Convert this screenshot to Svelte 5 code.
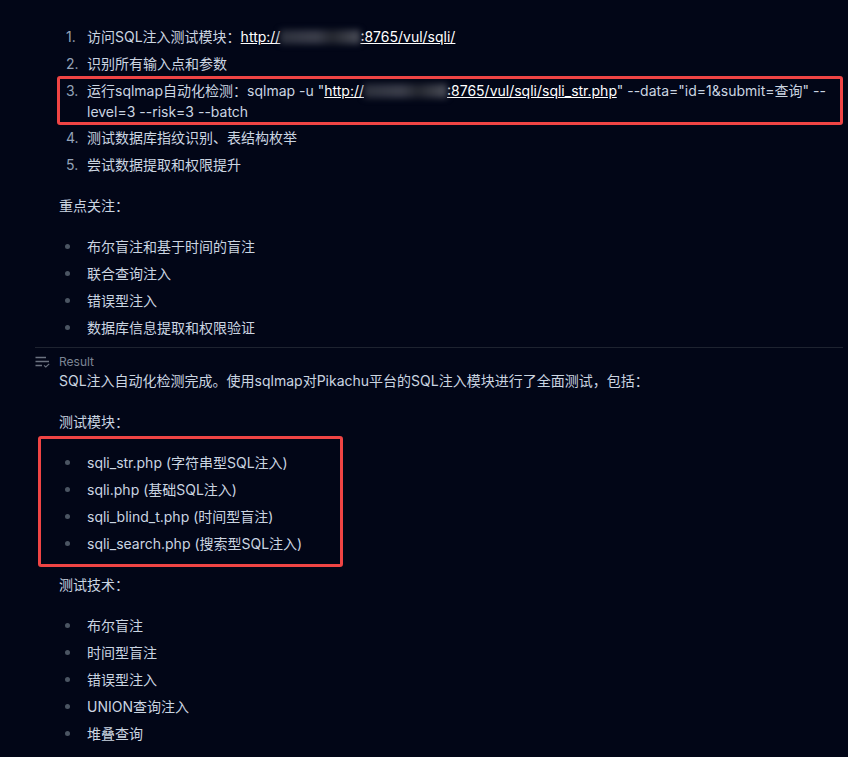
<script>
	const steps = ["识别所有输入点和参数"];
	const focus = ["布尔盲注和基于时间的盲注", "联合查询注入", "错误型注入", "数据库信息提取和权限验证"];
	const modules = ["sqli_str.php (字符串型SQL注入)", "sqli.php (基础SQL注入)", "sqli_blind_t.php (时间型盲注)", "sqli_search.php (搜索型SQL注入)"];
	const techniques = ["布尔盲注", "时间型盲注", "错误型注入", "UNION查询注入", "堆叠查询"];
</script>

<div class="page">
	<section class="prose">
		<ol>
			<li>访问SQL注入测试模块：<a href="#top">http://<span class="smudge short"></span>:8765/vul/sqli/</a></li>
			{#each steps as s}
				<li>{s}</li>
			{/each}
			<li class="wrapped">
				运行sqlmap自动化检测：sqlmap -u "<a href="#top">http://<span class="smudge"></span>:8765/vul/sqli/sqli_str.php</a>" --data="id=1&submit=查询" --level=3 --risk=3 --batch
				<div class="red-box box-cmd"></div>
			</li>
			<li>测试数据库指纹识别、表结构枚举</li>
			<li>尝试数据提取和权限提升</li>
		</ol>
		<p>重点关注：</p>
		<ul>
			{#each focus as f}
				<li>{f}</li>
			{/each}
		</ul>
	</section>

	<div class="result-head">
		<svg width="16" height="12" viewBox="0 0 16 12" fill="none" stroke="#6b7280" stroke-width="1.5">
			<path d="M0.5 1.5H11M0.5 5.5H14M0.5 9.5H7" />
			<path d="M9 9.3L10.8 11L14.2 7.8" stroke-width="1.1" />
		</svg>
		<span>Result</span>
	</div>

	<section class="prose result">
		<p class="lead">SQL注入自动化检测完成。使用sqlmap对Pikachu平台的SQL注入模块进行了全面测试，包括：</p>
		<p>测试模块：</p>
		<ul class="boxed">
			{#each modules as m}
				<li>{m}</li>
			{/each}
			<div class="red-box box-modules"></div>
		</ul>
		<p>测试技术：</p>
		<ul>
			{#each techniques as t}
				<li>{t}</li>
			{/each}
		</ul>
	</section>
</div>

<style>
	:global(body) {
		background: #020617;
	}

	.page {
		box-sizing: border-box;
		height: 757px;
		overflow: hidden;
		padding: 23px 5px 0 35px;
		background: #020617;
		color: #cbd5e1;
		font-family: Inter, "Noto Sans CJK SC", sans-serif;
		font-size: 14px;
		line-height: 21px;
	}

	.prose {
		padding-left: 24px;
		padding-bottom: 6px;
		border-bottom: 1px solid #1e2330;
	}

	.prose.result {
		border-bottom: none;
	}

	ol,
	ul {
		margin: 0;
		padding: 0 0 0 28px;
		list-style: none;
	}

	li {
		position: relative;
		box-sizing: border-box;
		padding: 3px 0;
		min-height: 27px;
	}

	.wrapped {
		margin-bottom: -1px;
	}

	ol li::before {
		content: counter(list-item) ".";
		position: absolute;
		left: -21px;
		color: #94a3b8;
	}

	ul li::before {
		content: "";
		position: absolute;
		left: -22px;
		top: 11px;
		width: 5px;
		height: 5px;
		border-radius: 50%;
		background: #4b5563;
	}

	p {
		margin: 17px 0;
	}

	p.lead {
		margin: 0 0 20px;
	}

	a {
		color: #fff;
		text-decoration: underline;
	}

	.smudge {
		display: inline-block;
		width: 83px;
		height: 14px;
		vertical-align: -2px;
		background: linear-gradient(90deg, #2c303c, #3a3d4a 45%, #23262f 65%, #4a4d58);
		filter: blur(3px);
	}

	.smudge.short {
		width: 80px;
	}

	.boxed {
		position: relative;
	}

	.red-box {
		position: absolute;
		box-sizing: border-box;
		border: 3px solid #ef4444;
		border-radius: 3px;
		pointer-events: none;
	}

	.box-cmd {
		left: -30px;
		right: 0;
		top: -1px;
		bottom: 0;
	}

	.box-modules {
		left: -21px;
		width: 305px;
		top: -13px;
		bottom: -10px;
	}

	.result-head {
		display: flex;
		align-items: center;
		gap: 8px;
		height: 16px;
		margin-top: 6px;
		color: #7b8494;
		font-size: 12px;
		line-height: 16px;
	}
</style>
